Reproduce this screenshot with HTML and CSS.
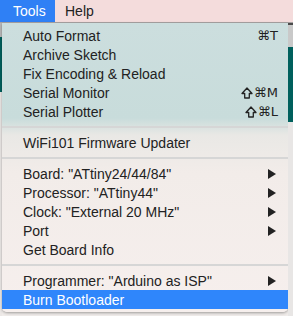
FILE: index.html
```html
<!DOCTYPE html>
<html>
<head>
    <title>Tools menu</title>
<link rel="stylesheet" href="styles.css">
</head>
<body>

<div class="menubar">
  <div class="bar-item active">Tools</div>
  <div class="bar-item">Help</div>
</div>

<div class="area">
  <div class="edge edge-left"></div>

  <div class="menu">
    <div class="item"><span>Auto Format</span><span class="key">&#8984;T</span></div>
    <div class="item"><span>Archive Sketch</span></div>
    <div class="item"><span>Fix Encoding &amp; Reload</span></div>
    <div class="item"><span>Serial Monitor</span>
      <span class="key"><svg class="shift" width="12" height="12" viewBox="0 0 12 12"><path d="M6 1 L11 6.5 H8.3 V11 H3.7 V6.5 H1 Z"/></svg>&#8984;M</span></div>
    <div class="item"><span>Serial Plotter</span>
      <span class="key"><svg class="shift" width="12" height="12" viewBox="0 0 12 12"><path d="M6 1 L11 6.5 H8.3 V11 H3.7 V6.5 H1 Z"/></svg>&#8984;L</span></div>
    <div class="sep"></div>
    <div class="item"><span>WiFi101 Firmware Updater</span></div>
    <div class="sep"></div>
    <div class="item"><span>Board: "ATtiny24/44/84"</span><span class="arrow"></span></div>
    <div class="item"><span>Processor: "ATtiny44"</span><span class="arrow"></span></div>
    <div class="item"><span>Clock: "External 20 MHz"</span><span class="arrow"></span></div>
    <div class="item"><span>Port</span><span class="arrow"></span></div>
    <div class="item"><span>Get Board Info</span></div>
    <div class="sep"></div>
    <div class="item"><span>Programmer: "Arduino as ISP"</span><span class="arrow"></span></div>
    <div class="item selected"><span>Burn Bootloader</span></div>
  </div>

  <div class="edge edge-right"></div>
</div>

</body>
</html>
```

FILE: styles.css
```css
body {
  margin: 0;
  width: 293px;
  height: 316px;
  overflow: hidden;
  background-color: #f0ecea;
  font-family: "Liberation Sans", Arial, "DejaVu Sans", sans-serif;
  font-size: 14px;
  color: #222;
}

/* top menu bar */
.menubar {
  display: flex;
  height: 22px;
  background-color: #f4dcdc;
  border-bottom: 1px solid #a9a4a4;
}

.bar-item {
  padding: 0 10px 0 10px;
  line-height: 22px;
}

.bar-item.active {
  padding-left: 13px;
  width: 32px;
  background-color: #2f80f5;
  color: white;
}

/* app window seen round the menu */
.area {
  display: flex;
  height: 293px;
}

.edge {
  flex: none;
}

.edge-left {
  width: 2px;
  background: linear-gradient(#b9b9b9 0, #b9b9b9 14px, #00605d 14px, #00605d 69px, #ece8e6 69px);
}

.edge-right {
  width: 5px;
  background: linear-gradient(#4a4a4a 0, #4a4a4a 2px, #c9c9c9 2px, #c9c9c9 24px, #00605d 24px, #00605d 99px, #e8e6e5 99px);
}

/* the drop-down */
.menu {
  width: 286px;
  height: 289px;
  padding: 3px 0 4px 0;
  box-sizing: border-box;
  border-radius: 0 0 5px 5px;
  background: linear-gradient(#ccdede 0, #c8dcdb 95px, #e9e8e5 112px, #f2ece9 150px, #f6efed 100%);
  box-shadow: 0 1px 3px rgba(0, 0, 0, 0.35);
}

.item {
  display: flex;
  justify-content: space-between;
  align-items: center;
  height: 19px;
  padding: 0 10px 0 21px;
  white-space: nowrap;
}

.item.selected {
  background-color: #2f86fb;
  color: white;
}

.key {
  display: flex;
  align-items: center;
  gap: 1px;
  font-family: "DejaVu Sans", sans-serif;
  font-size: 13px;
}

.shift {
  fill: none;
  stroke: #222;
  stroke-width: 1.3;
  stroke-linejoin: round;
}

.arrow {
  width: 0;
  height: 0;
  margin-right: 2px;
  border-top: 5px solid transparent;
  border-bottom: 5px solid transparent;
  border-left: 8px solid #222;
}

.sep {
  height: 2px;
  margin: 5px 0 5px 0;
  background-color: #d6d6d6;
}
```
